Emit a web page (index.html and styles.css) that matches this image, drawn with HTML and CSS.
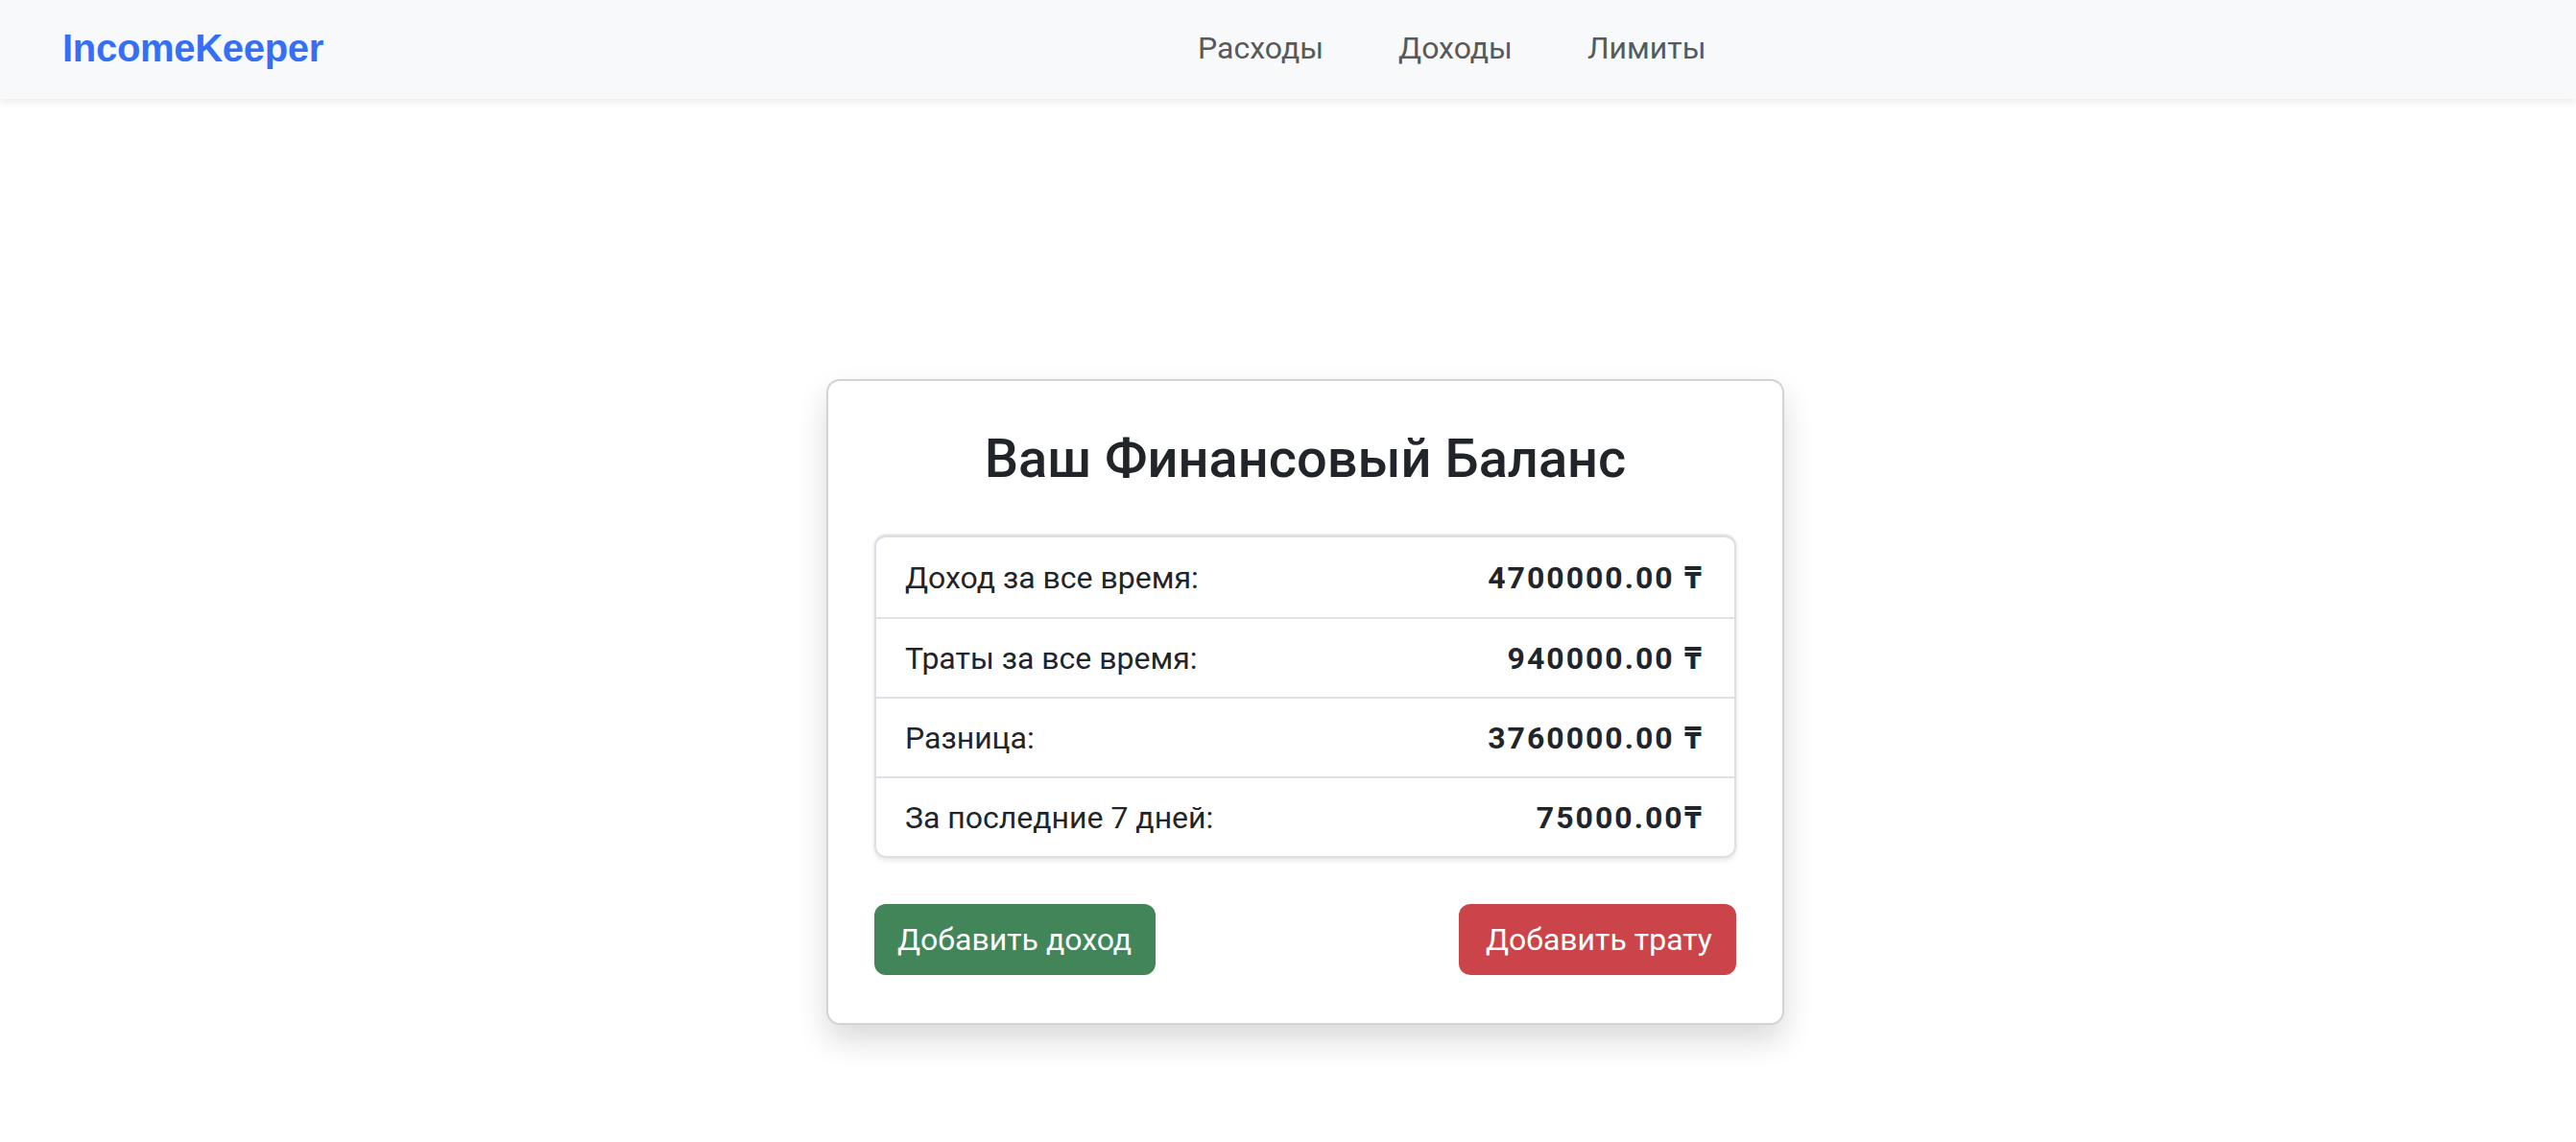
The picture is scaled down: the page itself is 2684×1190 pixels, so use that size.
FILE: index.html
```html
<!DOCTYPE html>
<html lang="ru">
<head>
<meta charset="utf-8">
<title>IncomeKeeper</title>
<link rel="stylesheet" href="styles.css">
</head>
<body>
<header class="navbar">
  <a class="brand" href="#">IncomeKeeper</a>
  <nav class="nav">
    <a class="nav-link" href="#">Расходы</a>
    <a class="nav-link" href="#">Доходы</a>
    <a class="nav-link" href="#">Лимиты</a>
  </nav>
</header>
<main class="main">
  <section class="card">
    <h3 class="card-title">Ваш Финансовый Баланс</h3>
    <ul class="list">
      <li class="list-item"><span>Доход за все время:</span><strong>4700000.00 ₸</strong></li>
      <li class="list-item"><span>Траты за все время:</span><strong>940000.00 ₸</strong></li>
      <li class="list-item"><span>Разница:</span><strong>3760000.00 ₸</strong></li>
      <li class="list-item"><span>За последние 7 дней:</span><strong>75000.00₸</strong></li>
    </ul>
    <div class="actions">
      <a class="btn btn-success" href="#">Добавить доход</a>
      <a class="btn btn-danger" href="#">Добавить трату</a>
    </div>
  </section>
</main>
</body>
</html>
```
FILE: styles.css
```css
* { box-sizing: border-box; }
html, body { margin: 0; padding: 0; }
body {
  font-family: Roboto, "Noto Sans", sans-serif;
  font-size: 32px;
  line-height: 48px;
  color: #212529;
  background: #fff;
  width: 2684px;
  height: 1190px;
  overflow: hidden;
}
a { text-decoration: none; }

.navbar {
  height: 103px;
  background: #f8f9fa;
  box-shadow: 0 4px 8px rgba(0,0,0,0.075);
  display: flex;
  align-items: center;
  padding: 0 65px 4px;
  position: relative;
  z-index: 1;
}
.brand {
  font-family: "Liberation Sans", Arial, sans-serif;
  font-weight: 700;
  font-size: 40px;
  color: #346ff6;
  letter-spacing: -0.3px;
}
.nav {
  display: flex;
  gap: 78px;
  margin-left: 911px;
}
.nav-link {
  color: #595959;
  font-size: 32px;
}

.main {
  display: flex;
  justify-content: center;
  padding-top: 292px;
  padding-left: 36px;
}
.card {
  width: 998px;
  border: 2px solid #d3d3d3;
  border-radius: 14px;
  background: #fff;
  box-shadow: 0 16px 32px rgba(0,0,0,0.15);
  padding: 48px 48px 50px;
}
.card-title {
  margin: 0 0 45px;
  text-align: center;
  font-size: 56px;
  font-weight: 500;
  line-height: 67px;
}
.list {
  list-style: none;
  margin: 0;
  padding: 0;
  border: 2px solid #dcdfe3;
  border-top-width: 3px;
  border-radius: 12px;
  box-shadow: 0 3px 5px rgba(0,0,0,0.09), 0 -1px 3px rgba(0,0,0,0.06);
}
.list-item {
  display: flex;
  justify-content: space-between;
  align-items: center;
  padding: 16px 32px 16px 30px;
  height: 83px;
}
.list-item + .list-item {
  border-top: 2px solid #dee2e6;
}
.list-item strong { font-weight: 700; letter-spacing: 2px; }

.actions {
  display: flex;
  justify-content: space-between;
  margin-top: 48px;
}
.btn {
  display: inline-block;
  color: #fff;
  font-size: 32px;
  line-height: 48px;
  padding: 13px 25px 13px 24px;
  border-radius: 12px;
}
.btn-danger { padding-left: 28px; }
.btn-success { background: #418559; }
.btn-danger { background: #cb444a; }
```
